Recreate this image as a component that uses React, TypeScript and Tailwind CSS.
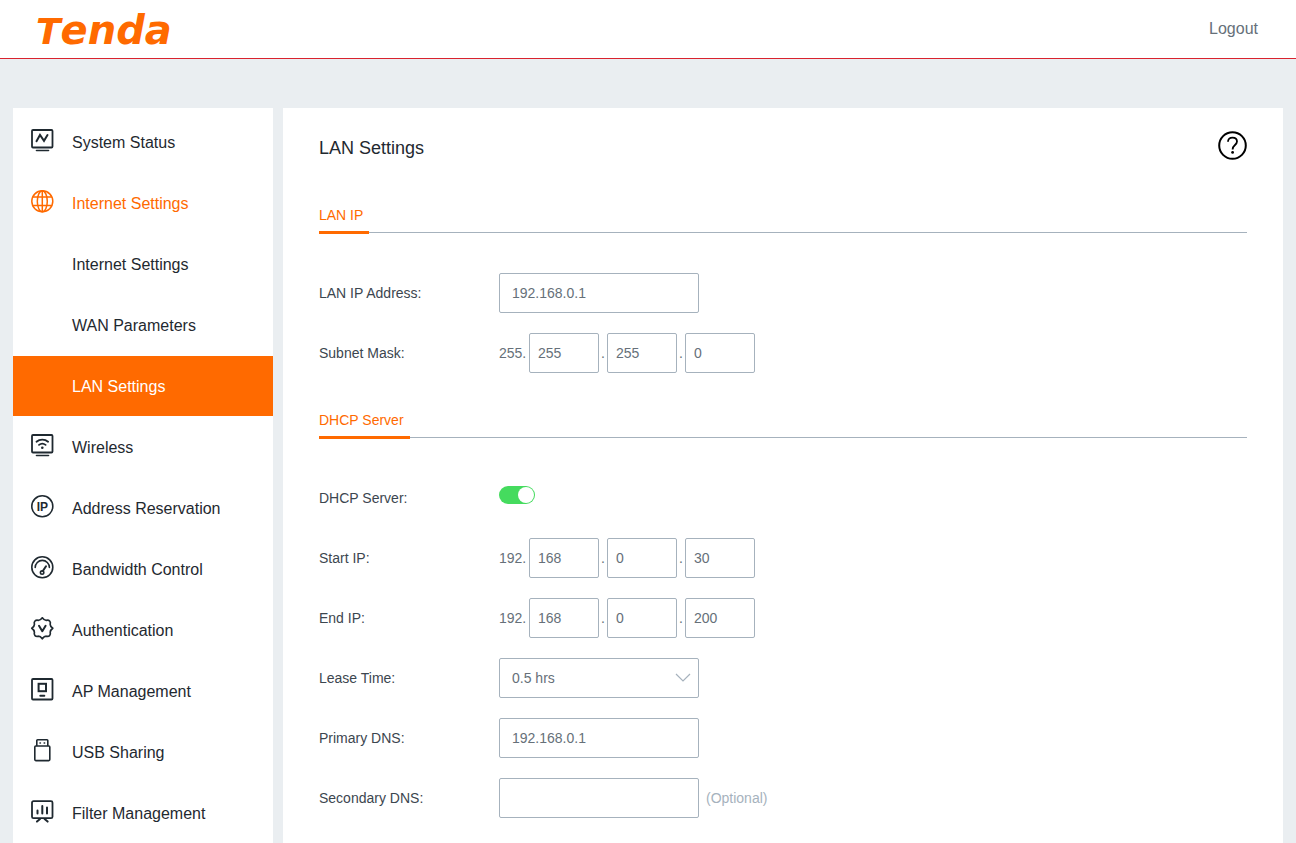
import { ReactNode, useState } from "react";
import clsx from "clsx";

interface IconProps {
  children: ReactNode;
}

function Icon({ children }: Readonly<IconProps>) {
  return (
    <svg
      viewBox="0 0 24 24"
      className="w-6 h-6 mb-1 shrink-0"
      fill="none"
      stroke="currentColor"
      strokeWidth="1.8"
      strokeLinecap="round"
      strokeLinejoin="round"
      aria-hidden="true"
    >
      {children}
    </svg>
  );
}

const icons = {
  status: (
    <Icon>
      <rect x="2" y="2" width="20.5" height="17.5" rx="1" />
      <path d="M6.5 13.2 L10 7 L14 12.8 L17.5 7" strokeLinejoin="miter" strokeWidth="2" />
      <path d="M6.5 22.5 H18.5" strokeWidth="1.6" />
    </Icon>
  ),
  globe: (
    <Icon>
      <g strokeWidth="1.5">
        <circle cx="12.3" cy="12.3" r="10.5" />
        <ellipse cx="12.3" cy="12.3" rx="5" ry="10.5" />
        <path d="M12.3 2 V22.5 M3.2 8 H21.4 M3.2 16.6 H21.4" />
      </g>
    </Icon>
  ),
  wireless: (
    <Icon>
      <rect x="2" y="2" width="20.5" height="17.5" rx="1" />
      <path d="M6.5 8.7 C9.8 5.8 14.8 5.8 18.1 8.7" />
      <path d="M9 11.9 C11 10.3 13.6 10.3 15.6 11.9" />
      <circle cx="12.3" cy="14.8" r="1.3" fill="currentColor" stroke="none" />
      <path d="M6.5 22.5 H18.5" strokeWidth="1.6" />
    </Icon>
  ),
  address: (
    <Icon>
      <circle cx="12.3" cy="12.3" r="10.5" strokeWidth="1.6" />
      <text
        x="12.4"
        y="16.6"
        textAnchor="middle"
        fill="currentColor"
        stroke="none"
        fontSize="12"
        fontWeight="700"
        fontFamily="'Liberation Sans', sans-serif"
      >
        IP
      </text>
    </Icon>
  ),
  bandwidth: (
    <Icon>
      <g strokeWidth="1.6">
        <circle cx="12.3" cy="12.3" r="10.5" />
        <path d="M5.2 12.5 A7.1 7.1 0 0 1 19.4 12.5" />
        <circle cx="12.1" cy="17.6" r="1.7" />
        <path d="M13 15.8 L16 11.3" strokeWidth="2" />
      </g>
    </Icon>
  ),
  auth: (
    <Icon>
      {/* eight-lobed seal */}
      <path
        d="M12.3 1.8 Q14.2 4.4 16.2 4.4 Q18.4 3.8 19.6 5 Q20.8 6.2 20.2 8.4 Q20.2 10.4 22.8 12.3 Q20.2 14.2 20.2 16.2 Q20.8 18.4 19.6 19.6 Q18.4 20.8 16.2 20.2 Q14.2 20.2 12.3 22.8 Q10.4 20.2 8.4 20.2 Q6.2 20.8 5 19.6 Q3.8 18.4 4.4 16.2 Q4.4 14.2 1.8 12.3 Q4.4 10.4 4.4 8.4 Q3.8 6.2 5 5 Q6.2 3.8 8.4 4.4 Q10.4 4.4 12.3 1.8 Z"
        strokeWidth="1.7"
      />
      <path d="M9 9.8 L12.3 15.2 L15.6 9.8" strokeWidth="2" />
    </Icon>
  ),
  ap: (
    <Icon>
      <rect x="2" y="2" width="20.5" height="20.5" rx="1" />
      <rect x="8.6" y="6.8" width="7.4" height="7.4" strokeLinejoin="miter" strokeWidth="2" />
      <path d="M10.3 18.7 H14.3" strokeWidth="2" />
    </Icon>
  ),
  usb: (
    <Icon>
      <g strokeWidth="1.6">
        <rect x="4.8" y="8" width="15" height="14.6" rx="1" />
        <path d="M6.8 7.5 V2.6 Q6.8 1.8 7.6 1.8 H17 Q17.8 1.8 17.8 2.6 V7.5" />
        <path d="M10 5 H10.4 M14.2 5 H14.6" />
      </g>
    </Icon>
  ),
  filter: (
    <Icon>
      <rect x="2" y="2.2" width="20.5" height="17" rx="1.5" />
      <path d="M7.5 11.5 V14.5 M12.3 7 V14.5 M17 8.5 V14.5" strokeWidth="2" />
      <path d="M10 20 L7 22.6 M14.6 20 L17.6 22.6" strokeWidth="2" />
    </Icon>
  ),
};

const menu: { label: string; icon?: ReactNode; open?: boolean; active?: boolean }[] = [
  { label: "System Status", icon: icons.status },
  { label: "Internet Settings", icon: icons.globe, open: true },
  { label: "Internet Settings" },
  { label: "WAN Parameters" },
  { label: "LAN Settings", active: true },
  { label: "Wireless", icon: icons.wireless },
  { label: "Address Reservation", icon: icons.address },
  { label: "Bandwidth Control", icon: icons.bandwidth },
  { label: "Authentication", icon: icons.auth },
  { label: "AP Management", icon: icons.ap },
  { label: "USB Sharing", icon: icons.usb },
  { label: "Filter Management", icon: icons.filter },
];

const fieldClass =
  "h-10 border border-[#a6b2bd] rounded-xs bg-white text-sm text-[#667079] outline-none focus:border-[#ff6a00]";

function Sidebar() {
  return (
    <nav className="w-[260px] shrink-0 bg-white pt-1">
      <ul className="flex flex-col gap-px">
        {menu.map((item, index) => (
          <li key={index}>
            <a
              href="#"
              className={clsx(
                "flex items-center gap-[18px] h-[60px] pl-[17px] pr-4",
                item.active && "bg-[#ff6a00] text-white",
                item.open && "text-[#ff6a00]",
                !item.active && !item.open && "text-[#1f2930]"
              )}
            >
              {item.icon ?? <span className="w-6" />}
              <span className="pt-0.5">{item.label}</span>
            </a>
          </li>
        ))}
      </ul>
    </nav>
  );
}

function SectionTitle({ children }: Readonly<{ children: ReactNode }>) {
  return (
    <h2 className="flex border-b border-[#a6b2bd] text-sm text-[#ff6a00]">
      <span className="-mb-[2px] pb-[6px] pr-[6px] border-b-3 border-[#ff6a00]">
        {children}
      </span>
    </h2>
  );
}

interface RowProps {
  label: string;
  id: string;
  children: ReactNode;
}

function Row({ label, id, children }: Readonly<RowProps>) {
  return (
    <div className="flex items-center h-10 text-sm">
      <label htmlFor={id} className="w-[180px] shrink-0 text-[#3c464f]">
        {label}
      </label>
      {children}
    </div>
  );
}

interface IpFieldProps {
  id: string;
  label: string;
  prefix: string;
  parts: string[];
}

function IpField({ id, label, prefix, parts }: Readonly<IpFieldProps>) {
  return (
    <Row label={label} id={id}>
      <span className="w-[30px] text-[#667079]">{prefix}.</span>
      {parts.map((part, index) => (
        <div key={index} className="flex items-center">
          {index > 0 && <span className="w-2 text-center text-[#667079]">.</span>}
          <input
            id={index === 0 ? id : `${id}-${index}`}
            aria-label={index === 0 ? undefined : `${label} ${index + 2}`}
            type="text"
            defaultValue={part}
            className={clsx(fieldClass, "w-[70px] px-2")}
          />
        </div>
      ))}
    </Row>
  );
}

export default function App() {
  const [dhcp, setDhcp] = useState(true);

  return (
    <div className="flex flex-col min-h-screen bg-[#eaeef1] font-['Liberation_Sans',Arial,sans-serif] text-base">
      <header className="flex items-center justify-between h-[59px] pl-9 pr-[38px] bg-white border-b border-[#d9232e]">
        <a
          href="#"
          className="flex items-baseline pt-1 text-[#ff6a00] font-['DejaVu_Sans',sans-serif] font-bold italic leading-10"
        >
          <span className="text-[36px]">T</span>
          <span className="text-[40px]">enda</span>
        </a>
        <a href="#" className="text-[#667079]">
          Logout
        </a>
      </header>

      <div className="flex flex-1 gap-[10px] px-[13px] pt-[49px]">
        <Sidebar />

        <main className="flex-1 min-w-0 bg-white px-9 pt-[23px] pb-6">
          <div className="flex items-center justify-between">
            <h1 className="pt-[5px] text-lg leading-6 text-[#1f2930]">LAN Settings</h1>
            <button type="button" aria-label="Help" className="text-black">
              <svg viewBox="0 0 29 29" className="w-[29px] h-[29px]" fill="none" stroke="currentColor">
                <circle cx="14.5" cy="14.5" r="13.3" strokeWidth="2" />
                <path
                  d="M10 10.8 C10 8 11.8 6.6 14.5 6.6 C17.2 6.6 19 8.2 19 10.6 C19 14 14.6 14.2 14.6 18.4"
                  strokeWidth="1.8"
                />
                <circle cx="14.6" cy="21.4" r="1.4" fill="currentColor" stroke="none" />
              </svg>
            </button>
          </div>

          <section className="mt-[45px]">
            <SectionTitle>LAN IP</SectionTitle>
            <div className="flex flex-col gap-5 mt-10">
              <Row label="LAN IP Address:" id="lan-ip">
                <input
                  id="lan-ip"
                  type="text"
                  defaultValue="192.168.0.1"
                  className={clsx(fieldClass, "w-[200px] px-3")}
                />
              </Row>
              <IpField id="mask" label="Subnet Mask:" prefix="255" parts={["255", "255", "0"]} />
            </div>
          </section>

          <section className="mt-[37px]">
            <SectionTitle>DHCP Server</SectionTitle>
            <div className="flex flex-col gap-5 mt-10">
              <Row label="DHCP Server:" id="dhcp">
                <input
                  id="dhcp"
                  type="checkbox"
                  checked={dhcp}
                  onChange={(e) => setDhcp(e.target.checked)}
                  className="relative mb-1.5 appearance-none w-9 h-[18px] rounded-full bg-gray-300 checked:bg-[#45db5e] before:absolute before:top-px before:left-px before:w-4 before:h-4 before:rounded-full before:bg-white checked:before:left-[19px]"
                />
              </Row>
              <IpField id="start-ip" label="Start IP:" prefix="192" parts={["168", "0", "30"]} />
              <IpField id="end-ip" label="End IP:" prefix="192" parts={["168", "0", "200"]} />
              <Row label="Lease Time:" id="lease">
                <div className="relative">
                  <select
                    id="lease"
                    defaultValue="0.5 hrs"
                    className={clsx(fieldClass, "w-[200px] px-3 appearance-none")}
                  >
                    <option>0.5 hrs</option>
                  </select>
                  <svg
                    viewBox="0 0 16 10"
                    className="absolute right-2 top-[15px] w-4 h-[10px] text-[#a6b2bd] pointer-events-none"
                    fill="none"
                    stroke="currentColor"
                    strokeWidth="1.2"
                  >
                    <path d="M1 1 L8 8 L15 1" />
                  </svg>
                </div>
              </Row>
              <Row label="Primary DNS:" id="dns1">
                <input
                  id="dns1"
                  type="text"
                  defaultValue="192.168.0.1"
                  className={clsx(fieldClass, "w-[200px] px-3")}
                />
              </Row>
              <Row label="Secondary DNS:" id="dns2">
                <input id="dns2" type="text" className={clsx(fieldClass, "w-[200px] px-3")} />
                <span className="ml-[7px] text-[#a6b2bd]">(Optional)</span>
              </Row>
            </div>
          </section>
        </main>
      </div>
    </div>
  );
}
